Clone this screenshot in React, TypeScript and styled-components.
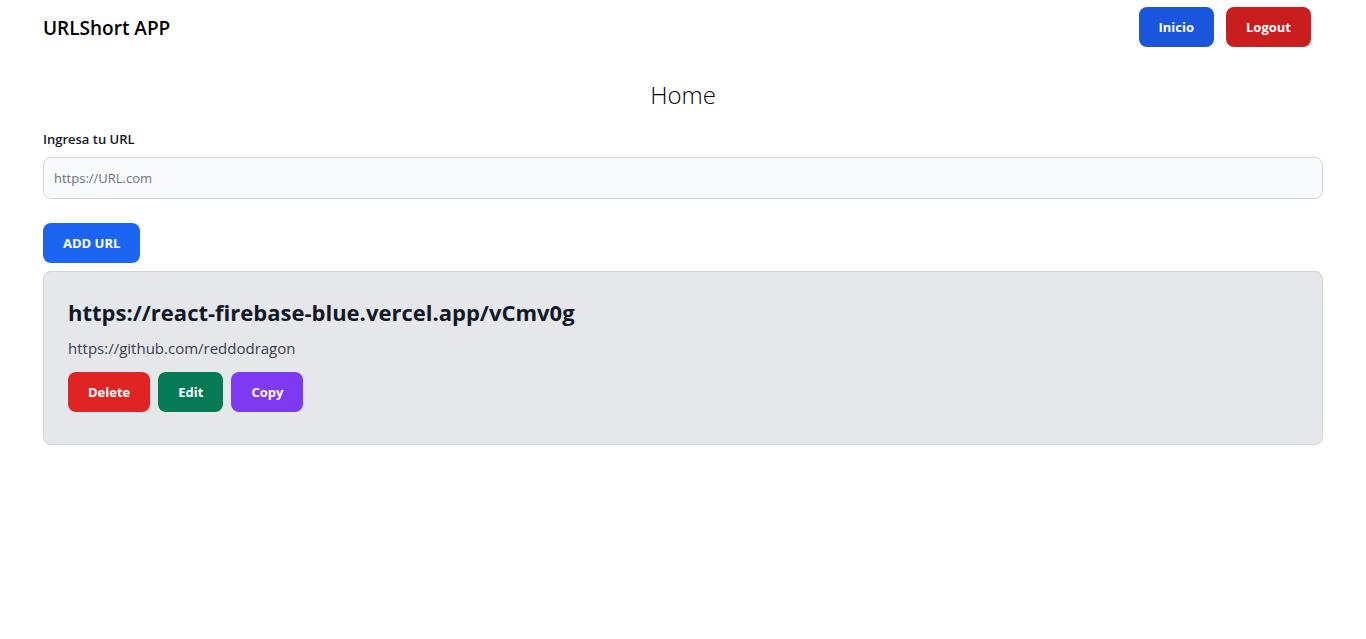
import React from "react";
import styled, { createGlobalStyle } from "styled-components";

const GlobalStyle = createGlobalStyle`
  *, *::before, *::after { box-sizing: border-box; }
  body {
    margin: 0;
    background: #fff;
    color: #000;
    font-family: "Open Sans", "Noto Sans", sans-serif;
    font-size: 15px;
    line-height: 24px;
  }
  h1, h2, p { margin: 0; }
`;

const Container = styled.div`
  max-width: 1280px;
  margin: 0 auto;
`;

const Nav = styled.nav`
  padding: 7px 0 8px;
`;

const NavRow = styled(Container)`
  display: flex;
  align-items: center;
  justify-content: space-between;
`;

const Brand = styled.a`
  padding-top: 2px;
  color: #000;
  font-size: 19px;
  font-weight: 600;
  line-height: 28px;
  text-decoration: none;
`;

const NavActions = styled.div`
  display: flex;
  gap: 12px;
  padding-right: 12px;
`;

const Button = styled.button<{ $color: string }>`
  height: 40px;
  padding: 0 20px;
  border: 0;
  border-radius: 8px;
  background: ${({ $color }) => $color};
  color: #fff;
  font-family: inherit;
  font-size: 13px;
  font-weight: 700;
  line-height: 20px;
  white-space: nowrap;
  cursor: pointer;
`;

const Title = styled.h1`
  margin: 24px 0 18px;
  font-size: 24px;
  font-weight: 300;
  line-height: 32px;
  text-align: center;
`;

const Form = styled.form`
  display: flex;
  flex-direction: column;
  align-items: flex-start;
`;

const Label = styled.label`
  margin-bottom: 8px;
  color: #111928;
  font-size: 13px;
  font-weight: 600;
  line-height: 20px;
`;

const Input = styled.input`
  width: 100%;
  height: 42px;
  margin-bottom: 24px;
  padding: 10px;
  border: 1px solid #d1d5db;
  border-radius: 8px;
  background: #f9fafb;
  color: #111928;
  font-family: inherit;
  font-size: 13px;
  line-height: 20px;
  &::placeholder { color: #6b7280; opacity: 1; }
`;

const Card = styled.article`
  margin-top: 8px;
  padding: 24px 24px 32px;
  border: 1px solid #d1d5db;
  border-radius: 8px;
  background: #e5e7eb;
`;

const ShortUrl = styled.h2`
  margin-bottom: 8px;
  color: #111928;
  font-size: 22px;
  font-weight: 700;
  line-height: 32px;
  overflow-wrap: anywhere;
`;

const LongUrl = styled.p`
  margin-bottom: 12px;
  color: #374151;
`;

const Actions = styled.div`
  display: flex;
  flex-wrap: wrap;
  gap: 8px;
`;

export default function App() {
  return (
    <>
      <GlobalStyle />
      <Nav>
        <NavRow>
          <Brand href="#">URLShort APP</Brand>
          <NavActions>
            <Button type="button" $color="#1a56db">Inicio</Button>
            <Button type="button" $color="#c81e1e">Logout</Button>
          </NavActions>
        </NavRow>
      </Nav>
      <Container as="main">
        <Title>Home</Title>
        <Form onSubmit={(event) => event.preventDefault()}>
          <Label htmlFor="url">Ingresa tu URL</Label>
          <Input id="url" type="text" placeholder="https://URL.com" />
          <Button type="submit" $color="#1c64f2">ADD URL</Button>
        </Form>
        <Card>
          <ShortUrl>https://react-firebase-blue.vercel.app/vCmv0g</ShortUrl>
          <LongUrl>https://github.com/reddodragon</LongUrl>
          <Actions>
            <Button type="button" $color="#e02424">Delete</Button>
            <Button type="button" $color="#057a55">Edit</Button>
            <Button type="button" $color="#7e3af2">Copy</Button>
          </Actions>
        </Card>
      </Container>
    </>
  );
}
